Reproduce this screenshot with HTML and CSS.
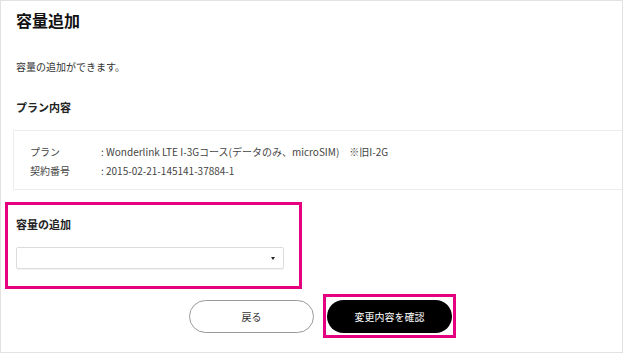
FILE: index.html
```html
<!DOCTYPE html>
<html lang="ja">
<head>
	<meta charset="UTF-8" />
	<meta name="viewport" content="width=device-width, initial-scale=1.0" />
	<title>容量追加</title>
	<link rel="stylesheet" href="styles.css">
</head>
<body>
	<div class="page">
		<h1 class="ttl">容量追加</h1>
		<p class="lead">容量の追加ができます。</p>
		<h2 class="sub">プラン内容</h2>
		<div class="plan">
			<dl class="row"><dt>プラン</dt><dd>: Wonderlink LTE I-3Gコース(データのみ、microSIM)　※旧I-2G</dd></dl>
			<dl class="row"><dt>契約番号</dt><dd>: 2015-02-21-145141-37884-1</dd></dl>
		</div>
		<div class="add">
			<h3 class="add-ttl">容量の追加</h3>
			<div class="select"><span class="caret"></span></div>
		</div>
		<div class="btns">
			<button class="btn back">戻る</button>
			<div class="mark">
				<button class="btn ok">変更内容を確認</button>
			</div>
		</div>
	</div>
</body>
</html>
```

FILE: styles.css
```css
*{margin: 0;padding: 0;box-sizing: border-box;}
body{
	font-family: "Noto Sans CJK JP", "Noto Sans", sans-serif;
	color: #333;background: #fff;
}
.page{
	width: 623px;height: 353px;overflow: hidden;
	border: 1px solid #e2e2e2;
}
.ttl{
	font-size: 16px;line-height: 20px;font-weight: bold;color: #111;
	padding: 9px 0 0 15px;
}
.lead{
	font-size: 10px;line-height: 16px;
	margin: 29px 0 0 15px;
}
.sub{
	font-size: 11px;line-height: 16px;font-weight: bold;color: #222;
	margin: 24px 0 0 15px;
}
.plan{
	margin: 15px -10px 0 12px;height: 60px;
	border: 1px solid #ececec;
	padding: 11px 0 0 16px;
}
.row{display: flex;font-size: 10px;line-height: 19px;color: #444;}
.row dt{width: 71px;}
.add{
	width: 297px;margin: 12px 0 0 4px;
	border: 3px solid #e4007f;
	padding: 11px 0 17px 8px;
}
.add-ttl{font-size: 11px;line-height: 16px;font-weight: bold;color: #222;}
.select{
	width: 268px;height: 22px;margin-top: 15px;
	border: 1px solid #dcdcdc;border-radius: 2px;
	box-shadow: 0 1px 1px rgba(0,0,0,0.05);
	display: flex;align-items: center;justify-content: flex-end;
	padding-right: 8px;
}
.caret{
	width: 0;height: 0;
	border-left: 2.5px solid transparent;border-right: 2.5px solid transparent;
	border-top: 3px solid #222;
}
.btns{display: flex;align-items: flex-start;margin: 5px 0 0 188px;}
.btn{
	width: 125px;height: 33px;border-radius: 17px;
	font-family: inherit;font-size: 10px;cursor: pointer;
}
.back{
	margin-top: 6px;
	background: #fff;color: #333;border: 1px solid #999;
}
.mark{
	margin-left: 9px;
	border: 3px solid #e4007f;
	padding: 3px 1px 2px;
}
.ok{background: #000;color: #fff;border: none;}
```
